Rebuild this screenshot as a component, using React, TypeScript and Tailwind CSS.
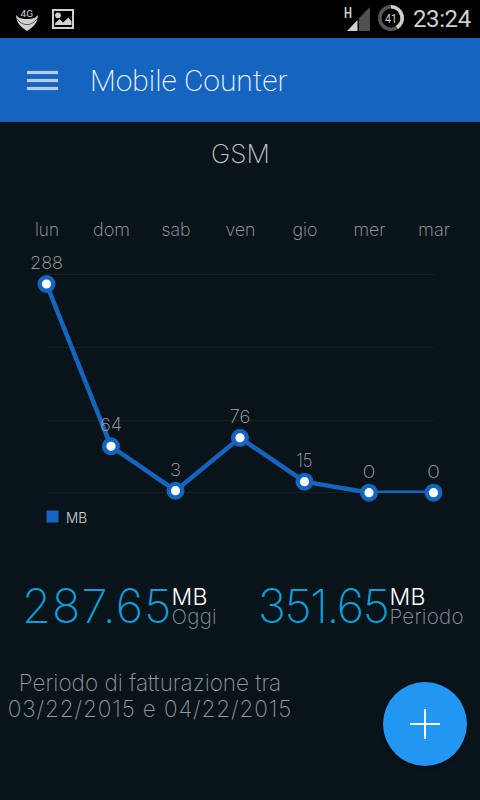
const CHART_POINTS = [
  { day: "lun", value: 288, x: 46.5, y: 284, dayWidth: 24, valueWidth: 33 },
  { day: "dom", value: 64, x: 111, y: 446.3, dayWidth: 37, valueWidth: 22 },
  { day: "sab", value: 3, x: 175.5, y: 490.7, dayWidth: 29, valueWidth: 11 },
  { day: "ven", value: 76, x: 240, y: 437.8, dayWidth: 30, valueWidth: 21 },
  { day: "gio", value: 15, x: 304.5, y: 481.7, dayWidth: 25, valueWidth: 16 },
  { day: "mer", value: 0, x: 369, y: 492.7, dayWidth: 32, valueWidth: 13 },
  { day: "mar", value: 0, x: 433.5, y: 492.7, dayWidth: 32, valueWidth: 13 },
];

const GRID_LINES = [274.5, 347.5, 420.5, 492.5];

function StatusBar() {
  return (
    <div className="flex h-[38px] items-center bg-black">
      <svg className="ml-4 mt-px h-[24px] w-[22px]" viewBox="0 0 22 24">
        <text
          x="4.5"
          y="8.500"
          fill="#d0d0d0"
          fontSize="9.500"
          textLength="12.500"
          lengthAdjust="spacingAndGlyphs"
          className="font-['Roboto',sans-serif]"
        >
          4G
        </text>
        <path
          d="M0 7c.3 3 .8 6 2.500 8.500C4.500 19 8 21 11 23c3-2 6.500-4 8.500-7.500C21.200 13 21.700 10 22 7l-3 2.800c-4.500 1.700-11.500 1.700-16 0z"
          fill="#d0d0d0"
        />
        <path
          d="M.5 10.500L4 14c4.500 3.500 9.500 3.500 14 0l3.500-3.500"
          stroke="#333"
          strokeWidth=".8"
          fill="none"
        />
      </svg>
      <svg className="ml-[14px] h-[20px] w-[22px]" viewBox="0 0 22 20">
        <rect x="1" y="1" width="20" height="18" fill="none" stroke="#d0d0d0" strokeWidth="2" />
        <circle cx="6" cy="6.300" r="2.900" fill="#d0d0d0" />
        <path d="M3 16v-1.500L7.500 10l3.500 3.500L16.500 8.500l3 4V16z" fill="#d0d0d0" />
      </svg>
      <svg className="ml-auto h-[26px] w-[27px]" viewBox="0 0 27 26">
        <text
          x="0"
          y="11.500"
          fill="#d0d0d0"
          fontSize="14.500"
          textLength="8"
          lengthAdjust="spacingAndGlyphs"
          className="font-['Roboto',sans-serif] font-semibold"
        >
          H
        </text>
        <path d="M3 25L13.500 14v11z" fill="#d0d0d0" />
        <path d="M15 25V12L26 1v24z" fill="#4f4f4f" />
      </svg>
      <svg className="ml-[7px] mb-[2px] h-[26px] w-[26px]" viewBox="0 0 26 26">
        <circle cx="13" cy="13" r="11.200" fill="none" stroke="#555" strokeWidth="3.600" />
        <path d="M13 1.800a11.200 11.200 0 0 1 6 20.600" fill="none" stroke="#d0d0d0" strokeWidth="3.600" />
        <text
          x="13"
          y="17.600"
          fill="#d0d0d0"
          fontSize="13"
          textAnchor="middle"
          textLength="12"
          lengthAdjust="spacingAndGlyphs"
          className="font-['Roboto',sans-serif]"
        >
          41
        </text>
      </svg>
      <span className="ml-[9px] mr-[8px] w-[59px] whitespace-nowrap font-['Roboto',sans-serif] text-[24px] tracking-[-0.4px] text-[#cfcfcf]">
        23:24
      </span>
    </div>
  );
}

function Toolbar() {
  return (
    <header className="flex h-[84px] items-center bg-[#1564c0]">
      <button aria-label="Menu" className="ml-[27px] flex w-[31px] flex-col gap-[5px]">
        <span className="h-[3px] bg-[#b4cbea] shadow-[0_0_1px_#b4cbea]" />
        <span className="h-[3px] bg-[#b4cbea] shadow-[0_0_1px_#b4cbea]" />
        <span className="h-[3px] bg-[#b4cbea] shadow-[0_0_1px_#b4cbea]" />
      </button>
      <h1 className="ml-8 whitespace-nowrap font-['Roboto',sans-serif] text-[30px] font-extralight tracking-[-0.05px] text-[#f2f7fd]">
        Mobile Counter
      </h1>
    </header>
  );
}

function UsageChart() {
  const line = CHART_POINTS.map(({ x, y }) => `${x},${y}`).join(" ");

  return (
    <svg className="h-[330px] w-[480px]" viewBox="0 210 480 330" fontSize="18">
      <clipPath id="plot">
        <rect x="40" y="270" width="400" height="223" />
      </clipPath>
      {GRID_LINES.map((y) => (
        <path key={y} d={`M47 ${y}H434`} stroke="#171f25" />
      ))}
      <polyline
        points={line}
        fill="none"
        stroke="#1565c0"
        strokeWidth="4.500"
        clipPath="url(#plot)"
      />
      {CHART_POINTS.map(({ day, value, x, y, dayWidth, valueWidth }) => (
        <g key={day} textAnchor="middle" className="font-extralight">
          <circle cx={x} cy={y} r="6.800" fill="#fff" stroke="#1565c0" strokeWidth="4.400" />
          <text x={x + 0.5} y="236" fill="#a3a6a8" textLength={dayWidth} lengthAdjust="spacingAndGlyphs">
            {day}
          </text>
          <text
            x={x}
            y={y - 15}
            fill="#a3a6a8"
            textLength={valueWidth}
            lengthAdjust="spacingAndGlyphs"
          >
            {value}
          </text>
        </g>
      ))}
      <rect x="46.500" y="510.500" width="12" height="12" fill="#1565c0" />
      <text
        x="66"
        y="523"
        fontSize="14"
        fill="#d5d8da"
        textLength="21"
        lengthAdjust="spacingAndGlyphs"
        className="font-light"
      >
        MB
      </text>
    </svg>
  );
}

function Usage({ amount, label, amountClass }: { amount: string; label: string; amountClass: string }) {
  return (
    <div className="flex whitespace-nowrap">
      <span className={`text-[47px] leading-[40px] font-extralight text-[#0aa0dc] ${amountClass}`}>
        {amount}
      </span>
      <div className="flex flex-col font-extralight">
        <span className="text-[23px] leading-[22px] tracking-[0.4px] font-light text-white">MB</span>
        <span className="text-[20.500px] leading-[17px] tracking-[0.3px] text-[#96999b]">{label}</span>
      </div>
    </div>
  );
}

export default function App() {
  return (
    <div className="flex h-[800px] w-[480px] flex-col overflow-hidden bg-[#09141a] font-['Inter',sans-serif]">
      <StatusBar />
      <Toolbar />
      <main className="flex flex-1 flex-col">
        <h2 className="pt-[14px] pl-px text-center text-[26px] leading-[36px] font-extralight text-[#c0c3c5]">
          GSM
        </h2>
        <div className="mt-[38px]">
          <UsageChart />
        </div>
        <div className="mt-[46px] flex h-[47px]">
          <div className="ml-[22px] w-[236px]">
            <Usage amount="287.65" label="Oggi" amountClass="w-[149.500px] tracking-[1.1px]" />
          </div>
          <Usage amount="351.65" label="Periodo" amountClass="w-[131.500px] tracking-[-1.500px]" />
        </div>
        <div className="mt-[37px] flex">
          <p className="w-[300px] whitespace-nowrap text-center text-[22.500px] leading-[26px] font-extralight text-[#96999b]">
            Periodo di fatturazione tra
            <br />
            <span className="tracking-[0.9px]">03/22/2015 e 04/22/2015</span>
          </p>
          <button
            aria-label="Aggiungi"
            className="mt-[12px] ml-[82.500px] flex size-[84px] items-center justify-center rounded-full bg-[#2196f3] shadow-[0_2px_4px_#0006]"
          >
            <svg className="size-[30px]" viewBox="0 0 30 30">
              <path d="M15 0v30M0 15h30" stroke="#fff" strokeWidth="2" />
            </svg>
          </button>
        </div>
      </main>
    </div>
  );
}
